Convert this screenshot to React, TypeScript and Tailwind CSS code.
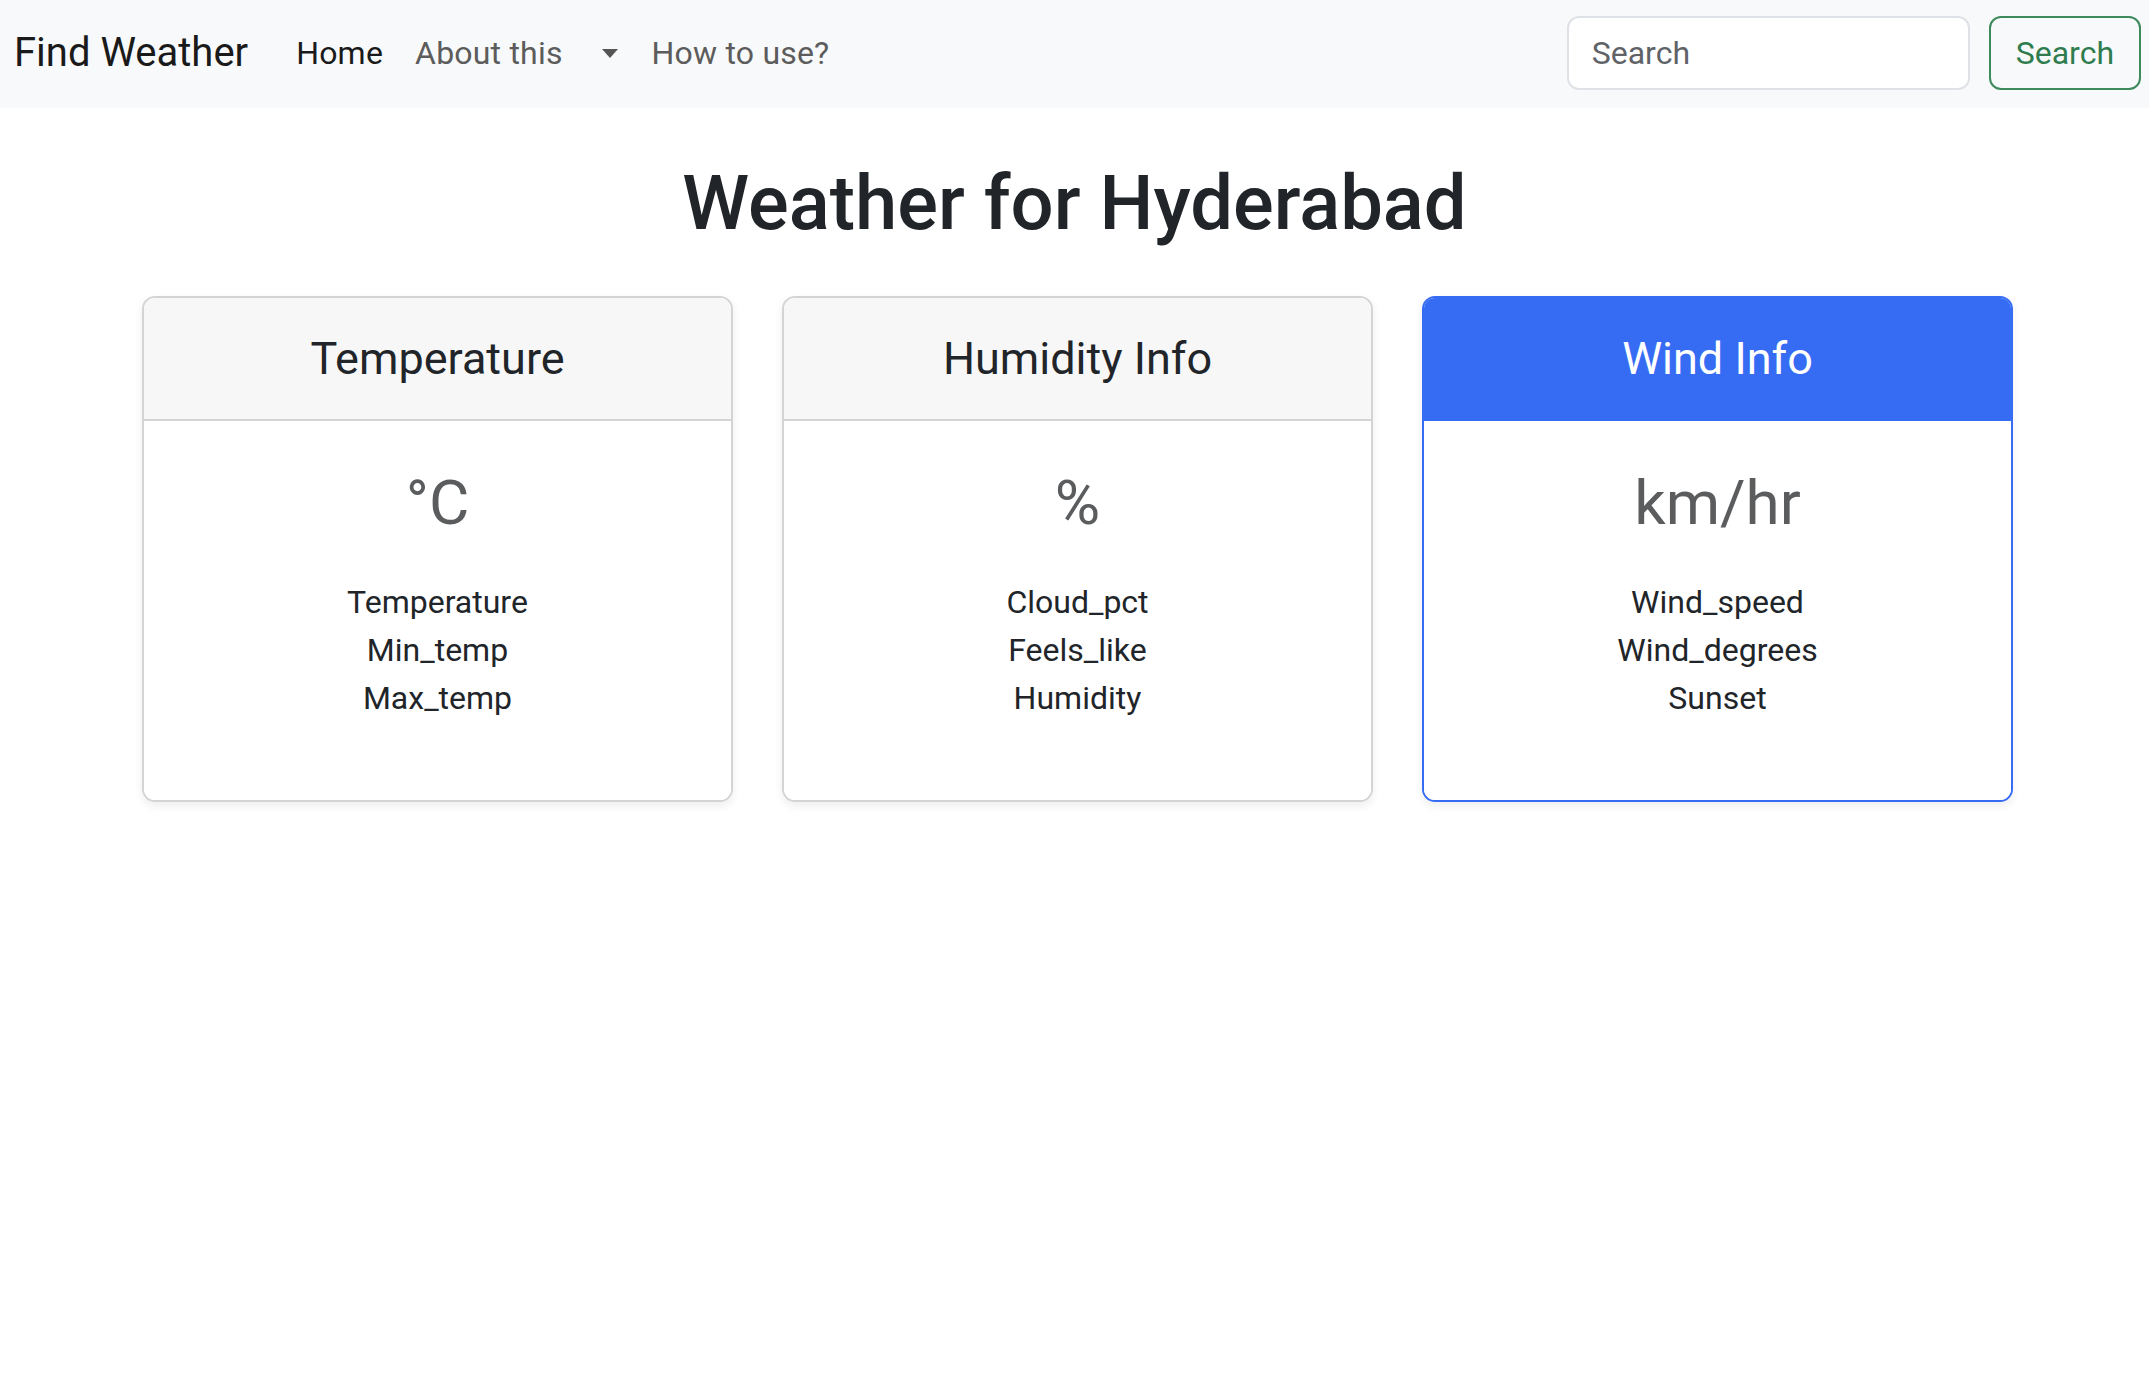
import React from "react";

const cards = [
  { title: "Temperature", unit: "°C", rows: ["Temperature", "Min_temp", "Max_temp"], primary: false },
  { title: "Humidity Info", unit: "%", rows: ["Cloud_pct", "Feels_like", "Humidity"], primary: false },
  { title: "Wind Info", unit: "km/hr", rows: ["Wind_speed", "Wind_degrees", "Sunset"], primary: true },
];

export default function App() {
  return (
    <div className="min-h-[1400px] bg-white text-[#212529] font-['Roboto','Liberation_Sans',sans-serif]">
      <nav className="h-[108px] bg-[#f8f9fa] flex items-center pl-[14px] pr-[8px] pb-[2px]">
        <a className="text-[40px] leading-[60px] text-[#1a1a1a] mr-[32px]">Find Weather</a>
        <ul className="flex items-center text-[32px] leading-[48px] tracking-[0.2px]">
          <li className="px-[16px] text-[#1a1a1a]">Home</li>
          <li className="px-[16px] text-[#5c5c5c]">About this</li>
          <li className="pl-[15px] pr-[18px] flex items-center h-[48px]">
            <span className="ml-[8px] w-0 h-0 border-t-[9px] border-t-[#555] border-l-[8px] border-l-transparent border-r-[8px] border-r-transparent" />
          </li>
          <li className="px-[16px] text-[#5c5c5c]">How to use?</li>
        </ul>
        <form className="ml-auto flex items-center gap-[19px]">
          <input
            placeholder="Search"
            className="w-[403px] h-[74px] bg-white border-2 border-[#dee2e6] rounded-[12px] px-[23px] text-[32px] placeholder:text-[#5f6368] outline-none"
          />
          <button
            type="button"
            className="h-[74px] px-[25px] border-2 border-[#3d8a5c] rounded-[12px] text-[32px] text-[#2f7d4f]"
          >
            Search
          </button>
        </form>
      </nav>

      <h1 className="text-center text-[76px] leading-[90px] font-medium mt-[50px] mb-[48px] text-[#212529]">
        Weather for Hyderabad
      </h1>

      <div className="ml-[142px] w-[1871px] grid grid-cols-3 gap-[49px]">
        {cards.map((c) => (
          <div
            key={c.title}
            className={`h-[506px] rounded-[13px] border-2 overflow-hidden shadow-[0_4px_10px_rgba(0,0,0,0.07)] flex flex-col ${
              c.primary ? "border-[#356cf3]" : "border-[#d4d4d4]"
            }`}
          >
            <div
              className={`h-[123px] flex items-center justify-center text-[45px] font-normal border-b-2 ${
                c.primary ? "bg-[#356cf3] text-white border-[#356cf3]" : "bg-[#f7f7f7] text-[#212529] border-[#d4d4d4]"
              }`}
            >
              {c.title}
            </div>
            <div className="flex-1 bg-white flex flex-col items-center pt-[45px]">
              <div className="text-[62px] leading-[74px] text-[#5a5c5e]">{c.unit}</div>
              <div className="mt-[38px] text-[32px] leading-[48px] text-center text-[#212529]">
                {c.rows.map((r) => (
                  <div key={r}>{r}</div>
                ))}
              </div>
            </div>
          </div>
        ))}
      </div>
    </div>
  );
}
